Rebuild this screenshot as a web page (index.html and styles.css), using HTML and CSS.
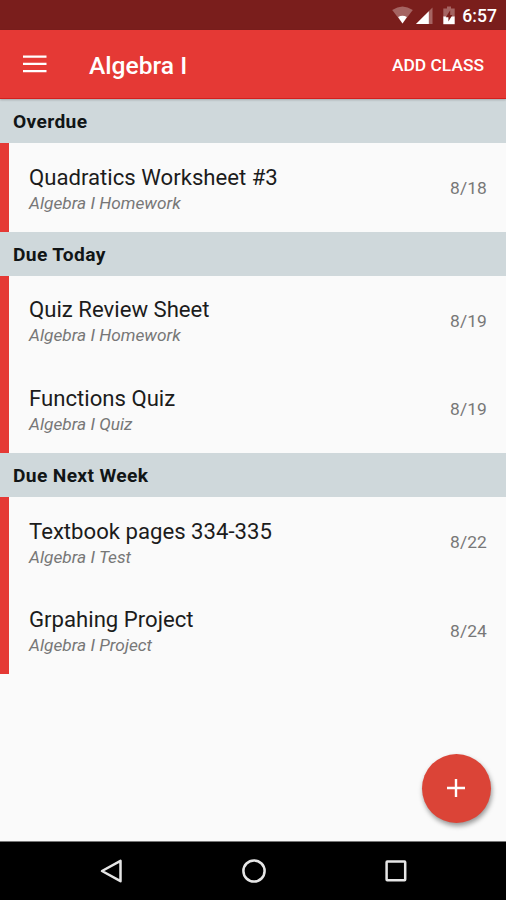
FILE: index.html
```html
<!DOCTYPE html>
<html lang="en">
<head>
<meta charset="utf-8">
<title>Algebra I</title>
<link rel="stylesheet" href="styles.css">
</head>
<body>
<div class="screen">
  <div class="status">
    <svg class="status-icons" width="68" height="30" viewBox="0 0 68 30">
      <path d="M1.2 10.1Q11.5 2.8 21.8 10.1L11.5 23.5Z" fill="#a56462"/>
      <path d="M7.1 16.9Q11.5 14.7 15.9 16.9L11.5 23.5Z" fill="#fff"/>
      <path d="M25 24L41.5 7.5V24Z" fill="#a56462"/>
      <path d="M25 24L37.8 11.2V24Z" fill="#fff"/>
      <path d="M52.3 8.5H56V6.5H60V8.5H63.7V17H52.3Z" fill="#a56462"/>
      <path d="M52.3 16.5H63.7V24.2H52.3Z" fill="#fff"/>
      <path d="M59.2 10.2L54.8 17.2H57.4V21.6L61.4 15H59.2Z" fill="#7a1e1c"/>
    </svg>
    <span class="clock">6:57</span>
  </div>
  <header class="appbar">
    <svg class="menu" width="24" height="18" viewBox="0 0 24 18"><path d="M0 1.6H23.5M0 8.9H23.5M0 16.1H23.5" stroke="#fff" stroke-width="2.4"/></svg>
    <h1 class="title">Algebra I</h1>
    <span class="add">ADD CLASS</span>
  </header>
  <main class="list">
    <h2 class="section">Overdue</h2>
    <div class="row"><div class="info"><div class="name">Quadratics Worksheet #3</div><div class="sub">Algebra I Homework</div></div><span class="date">8/18</span></div>
    <h2 class="section">Due Today</h2>
    <div class="row"><div class="info"><div class="name">Quiz Review Sheet</div><div class="sub">Algebra I Homework</div></div><span class="date">8/19</span></div>
    <div class="row"><div class="info"><div class="name">Functions Quiz</div><div class="sub">Algebra I Quiz</div></div><span class="date">8/19</span></div>
    <h2 class="section">Due Next Week</h2>
    <div class="row"><div class="info"><div class="name">Textbook pages 334-335</div><div class="sub">Algebra I Test</div></div><span class="date">8/22</span></div>
    <div class="row"><div class="info"><div class="name">Grpahing Project</div><div class="sub">Algebra I Project</div></div><span class="date">8/24</span></div>
    <button class="fab" aria-label="Add"><svg width="18" height="18" viewBox="0 0 18 18"><path d="M9 0V18M0 9H18" stroke="#fff" stroke-width="2.4"/></svg></button>
  </main>
  <nav class="nav">
    <svg width="26" height="26" viewBox="0 0 26 26"><path d="M3 13L21.5 2.8V23.2Z"/></svg>
    <svg width="26" height="26" viewBox="0 0 26 26"><circle cx="13" cy="13" r="10.6"/></svg>
    <svg width="26" height="26" viewBox="0 0 26 26"><rect x="3.6" y="3.6" width="18.6" height="18.6" rx=".6"/></svg>
  </nav>
</div>
</body>
</html>
```
FILE: styles.css
```css
* { box-sizing: border-box; }
body { margin: 0; font-family: Roboto, "Liberation Sans", sans-serif; }
.screen { width: 506px; height: 900px; display: flex; flex-direction: column; background: #fafafa; overflow: hidden; }
.status { flex: none; height: 30px; background: #7a1e1c; color: #fff; display: flex; align-items: center; justify-content: flex-end; padding-right: 9px; }
.status-icons { margin-right: 3.5px; }
.clock { font-size: 17.6px; font-weight: 500; line-height: 30px; padding-top: 2px; }
.appbar { flex: none; position: relative; z-index: 1; height: 69px; background: #e53935; border-bottom: 1px solid #d3201d; color: #fff; display: flex; align-items: center; padding: 0 22px 0 23px; box-shadow: 0 1px 2px rgba(0, 0, 0, .22); }
.menu { margin-right: 42px; }
.title { flex: 1; margin: 4px 0 0; font-size: 24.6px; font-weight: 500; line-height: 30px; }
.add { font-size: 17.4px; font-weight: 500; line-height: 24px; padding-top: 2px; }
.list { flex: 1; position: relative; }
.section { margin: 0; height: 44.25px; padding: 0 13px; background: #cfd8db; color: #111516; font-size: 19.2px; font-weight: 700; line-height: 45.5px; letter-spacing: .35px; }
.row { height: 88.5px; border-left: 9px solid #e53935; padding: 1px 19px 0 20px; display: flex; align-items: center; }
.info { flex: 1; padding-top: 3px; }
.name { color: #1c1c1c; font-size: 22.15px; line-height: 27px; }
.sub { color: #777; font-size: 17.3px; font-style: italic; line-height: 25px; }
.date { color: #777; font-size: 17.4px; line-height: 24px; letter-spacing: .1px; }
.fab { position: absolute; right: 15.5px; bottom: 18.5px; width: 69px; height: 69px; padding: 0; border: 0; border-radius: 50%; background: #db4437; box-shadow: 1px 3px 5px rgba(0, 0, 0, .4); display: flex; align-items: center; justify-content: center; }
.nav { flex: none; height: 59px; background: #000; border-top: 1px solid #777; display: flex; align-items: center; justify-content: space-between; padding: 0 97px 0 99px; }
.nav svg { fill: none; stroke: #e6e6e6; stroke-width: 2.5; stroke-linejoin: round; }
```
